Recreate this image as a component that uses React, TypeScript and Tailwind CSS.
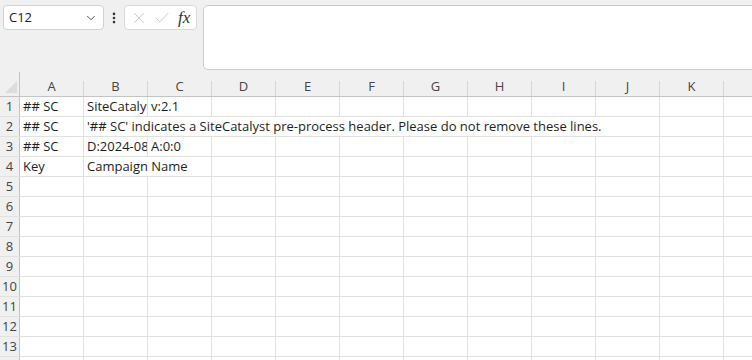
import { ChevronDown, EllipsisVertical, X, Check } from 'lucide-react'

const COLS = ['A', 'B', 'C', 'D', 'E', 'F', 'G', 'H', 'I', 'J', 'K', '']

type CellDef = { text?: string; spill?: boolean; open?: boolean }

// open = the right gridline is hidden because text from the left runs over it
const DATA: Record<number, CellDef[]> = {
  1: [{ text: '## SC' }, { text: 'SiteCataly' }, { text: 'v:2.1' }],
  2: [
    { text: '## SC' },
    { text: "'## SC' indicates a SiteCatalyst pre-process header. Please do not remove these lines.", spill: true, open: true },
    { open: true }, { open: true }, { open: true }, { open: true }, { open: true }, { open: true }, { open: true },
  ],
  3: [{ text: '## SC' }, { text: 'D:2024-08' }, { text: 'A:0:0' }],
  4: [{ text: 'Key' }, { text: 'Campaign Name', spill: true, open: true }],
}

function Cell({ c }: { c?: CellDef }) {
  return (
    <div
      className={`h-full w-[64px] shrink-0 pl-[3px] text-[13px] leading-[19px] whitespace-nowrap text-[#1e1e1e] ${
        c?.spill ? 'relative z-10 overflow-visible' : 'overflow-hidden'
      } ${c?.open ? '' : 'border-r border-[#e1e1e1]'}`}
    >
      {c?.text}
    </div>
  )
}

export default function App() {
  const rows = Array.from({ length: 14 }, (_, i) => i + 1)
  return (
    <div className="h-[360px] w-[752px] overflow-hidden bg-white" style={{ fontFamily: '"Open Sans", sans-serif' }}>

      {/* name box + formula bar */}
      <div className="flex h-[72px] items-start bg-[#f0f0f0] pl-[3px] pt-[5px]">
        <div className="flex h-[25px] w-[101px] items-center justify-between rounded-[4px] border border-[#d1d1d1] bg-white pl-[5px] pr-[5px]">
          <span className="text-[13px] text-[#222]">C12</span>
          <ChevronDown className="h-[14px] w-[14px] text-[#444]" strokeWidth={1.5} />
        </div>
        <div className="ml-[3px] flex h-[25px] w-[14px] items-center justify-center">
          <EllipsisVertical className="h-[14px] w-[14px] text-[#333]" strokeWidth={2.5} />
        </div>
        <div className="ml-[3px] flex h-[25px] w-[73px] items-center gap-[5px] rounded-[4px] border border-[#d9d9d9] bg-white pl-[5px]">
          <X className="h-[18px] w-[18px] text-[#bdbdbd]" strokeWidth={1.1} />
          <Check className="h-[18px] w-[18px] text-[#bdbdbd]" strokeWidth={1.1} />
          <span className="pl-[2px] text-[17px] italic leading-none text-[#333]" style={{ fontFamily: '"Liberation Serif", serif' }}>fx</span>
        </div>
        <div className="-mr-[8px] ml-[6px] h-[65px] flex-1 rounded-[5px] border border-[#cccccc] bg-white" />
      </div>

      {/* column headers */}
      <div className="flex h-[25px] border-b border-[#c4c4c4] bg-[#f0f0f0]">
        <div className="flex w-[20px] shrink-0 items-end justify-end border-r border-[#c4c4c4] pb-[3px] pr-[2px]">
          <svg width="12" height="12" viewBox="0 0 12 12"><path d="M12 0 L12 12 L0 12 Z" fill="#dcdcdc" /></svg>
        </div>
        {COLS.map((c, i) => (
          <div key={i} className="flex w-[64px] shrink-0">
            <div className="flex flex-1 items-end justify-center pb-[1px] text-[13px] leading-[18px] text-[#444]">{c}</div>
            <div className="h-[15px] w-px self-end bg-[#d6d6d6]" />
          </div>
        ))}
      </div>

      {/* rows; row 14 only peeks in at the bottom edge */}
      {rows.map(r => (
        <div key={r} className="flex h-[20px] border-b border-[#e1e1e1]">
          <div className="flex w-[20px] shrink-0 items-center justify-center border-r border-[#c4c4c4] bg-[#f0f0f0] text-[13px] leading-[19px] text-[#444]">
            {r < 14 ? r : ''}
          </div>
          {COLS.map((c, i) => (
            <Cell key={i} c={DATA[r]?.[i]} />
          ))}
        </div>
      ))}
    </div>
  )
}
